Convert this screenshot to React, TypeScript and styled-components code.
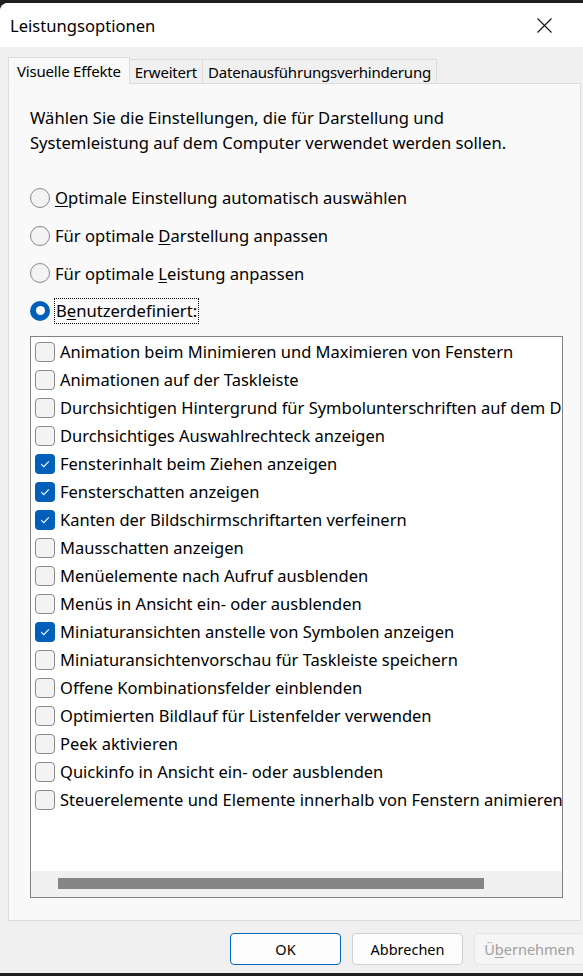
import React from 'react';
import styled, { createGlobalStyle } from 'styled-components';

const GlobalStyle = createGlobalStyle`
  *, *::before, *::after {
    box-sizing: border-box;
  }
  html, body {
    margin: 0;
    padding: 0;
    background: #1f1f1f;
  }
  body {
    font-family: 'Noto Sans', 'Open Sans', sans-serif;
    color: #000;
  }
`;

const Window = styled.div`
  width: 583px;
  height: 970px;
  margin-top: 3px;
  background: #f0f0f0;
  border-top-left-radius: 8px;
  overflow: hidden;
  display: flex;
  flex-direction: column;
`;

const TitleBar = styled.div`
  height: 44px;
  flex-shrink: 0;
  background: #fff;
  display: flex;
  align-items: center;
  justify-content: space-between;
  padding: 0 31px 0 10px;
  font-size: 16.6px;
`;

const Body = styled.div`
  flex: 1;
  display: flex;
  flex-direction: column;
  padding: 10px 2px 0 8px;
`;

const Tabs = styled.div`
  display: flex;
  align-items: flex-end;
  height: 26px;
  flex-shrink: 0;
  position: relative;
  z-index: 1;
`;

const Tab = styled.div<{ $active?: boolean }>`
  height: ${(p) => (p.$active ? '27px' : '25px')};
  padding: 0 ${(p) => (p.$active ? '8px' : '5px')};
  display: flex;
  align-items: center;
  font-size: 15px;
  letter-spacing: -0.2px;
  background: ${(p) => (p.$active ? '#f9f9f9' : '#f0f0f0')};
  border: 1px solid #dcdcdc;
  border-bottom: ${(p) => (p.$active ? '1px solid #f9f9f9' : '1px solid #dcdcdc')};
  margin-left: ${(p) => (p.$active ? '0' : '-1px')};
  margin-bottom: -1px;
`;

const Panel = styled.div`
  height: 838px;
  flex-shrink: 0;
  background: #f9f9f9;
  border: 1px solid #dcdcdc;
  padding: 21px 17px 0 21px;
  display: flex;
  flex-direction: column;
`;

const Description = styled.p`
  margin: 0 0 24px;
  font-size: 16.6px;
  line-height: 25px;
`;

const RadioGroup = styled.div`
  display: flex;
  flex-direction: column;
  margin-bottom: 6px;
`;

const RadioRow = styled.label`
  display: flex;
  align-items: center;
  height: 37.7px;
  font-size: 16.6px;
`;

const RadioCircle = styled.span<{ $checked?: boolean }>`
  width: 20px;
  height: 20px;
  border-radius: 50%;
  margin-right: 5px;
  flex-shrink: 0;
  display: flex;
  align-items: center;
  justify-content: center;
  border: ${(p) => (p.$checked ? 'none' : '1px solid #8a8a8a')};
  background: ${(p) => (p.$checked ? '#005fb8' : '#f3f3f3')};
  &::after {
    content: '';
    display: ${(p) => (p.$checked ? 'block' : 'none')};
    width: 9px;
    height: 9px;
    border-radius: 50%;
    background: #fff;
  }
`;

const FocusLabel = styled.span`
  outline: 1px dotted #000;
  padding: 0 1px;
  line-height: 24px;
`;

const Key = styled.span`
  text-decoration: underline;
  text-underline-offset: 2px;
`;

const ListBox = styled.div`
  height: 562px;
  flex-shrink: 0;
  background: #fff;
  border: 1px solid #828282;
  display: flex;
  flex-direction: column;
  overflow: hidden;
`;

const Items = styled.div`
  flex: 1;
  padding-top: 1px;
  overflow: hidden;
`;

const Item = styled.div`
  display: flex;
  align-items: center;
  height: 28px;
  padding-left: 4px;
  white-space: nowrap;
  font-size: 16.5px;
`;

const Box = styled.span<{ $checked?: boolean }>`
  width: 20px;
  height: 20px;
  border-radius: 4px;
  margin-right: 5px;
  flex-shrink: 0;
  display: flex;
  align-items: center;
  justify-content: center;
  border: ${(p) => (p.$checked ? 'none' : '1px solid #8a8a8a')};
  background: ${(p) => (p.$checked ? '#005fb8' : '#f3f3f3')};
`;

const HScroll = styled.div`
  height: 26px;
  flex-shrink: 0;
  background: #f0f0f0;
  display: flex;
  align-items: center;
  padding-left: 27px;
`;

const Thumb = styled.div`
  width: 426px;
  height: 11px;
  background: #858585;
`;

const Footer = styled.div`
  display: flex;
  justify-content: flex-end;
  gap: 11px;
  padding-top: 12px;
  margin-right: -4px;
`;

const Button = styled.button<{ $primary?: boolean }>`
  width: 111px;
  height: 32px;
  font-family: inherit;
  font-size: 14.5px;
  border-radius: 4px;
  background: #fdfdfd;
  color: ${(p) => (p.disabled ? '#a0a0a0' : '#000')};
  border: 1px solid ${(p) => (p.$primary ? '#0067c0' : p.disabled ? '#e5e5e5' : '#d0d0d0')};
  padding: 0;
  &:disabled {
    background: #f5f5f5;
  }
`;

const Check = () => (
  <svg width="12" height="12" viewBox="0 0 12 12">
    <path d="M2.2 6.2 L4.8 8.7 L9.8 3.4" fill="none" stroke="#fff" strokeWidth="1.1" />
  </svg>
);

const Close = () => (
  <svg width="15" height="15" viewBox="0 0 15 15">
    <path d="M0.5 0.5 L14.5 14.5 M14.5 0.5 L0.5 14.5" stroke="#1a1a1a" strokeWidth="1.2" />
  </svg>
);

const items: [string, boolean][] = [
  ['Animation beim Minimieren und Maximieren von Fenstern', false],
  ['Animationen auf der Taskleiste', false],
  ['Durchsichtigen Hintergrund für Symbolunterschriften auf dem Desktop', false],
  ['Durchsichtiges Auswahlrechteck anzeigen', false],
  ['Fensterinhalt beim Ziehen anzeigen', true],
  ['Fensterschatten anzeigen', true],
  ['Kanten der Bildschirmschriftarten verfeinern', true],
  ['Mausschatten anzeigen', false],
  ['Menüelemente nach Aufruf ausblenden', false],
  ['Menüs in Ansicht ein- oder ausblenden', false],
  ['Miniaturansichten anstelle von Symbolen anzeigen', true],
  ['Miniaturansichtenvorschau für Taskleiste speichern', false],
  ['Offene Kombinationsfelder einblenden', false],
  ['Optimierten Bildlauf für Listenfelder verwenden', false],
  ['Peek aktivieren', false],
  ['Quickinfo in Ansicht ein- oder ausblenden', false],
  ['Steuerelemente und Elemente innerhalb von Fenstern animieren', false],
];

function App() {
  return (
    <>
      <GlobalStyle />
      <Window>
        <TitleBar>
          <span>Leistungsoptionen</span>
          <Close />
        </TitleBar>
        <Body>
          <Tabs>
            <Tab $active>Visuelle Effekte</Tab>
            <Tab>Erweitert</Tab>
            <Tab>Datenausführungsverhinderung</Tab>
          </Tabs>
          <Panel>
            <Description>
              Wählen Sie die Einstellungen, die für Darstellung und
              <br />
              Systemleistung auf dem Computer verwendet werden sollen.
            </Description>
            <RadioGroup>
              <RadioRow>
                <RadioCircle />
                <span>
                  <Key>O</Key>ptimale Einstellung automatisch auswählen
                </span>
              </RadioRow>
              <RadioRow>
                <RadioCircle />
                <span>
                  Für optimale <Key>D</Key>arstellung anpassen
                </span>
              </RadioRow>
              <RadioRow>
                <RadioCircle />
                <span>
                  Für optimale <Key>L</Key>eistung anpassen
                </span>
              </RadioRow>
              <RadioRow>
                <RadioCircle $checked />
                <FocusLabel>
                  B<Key>e</Key>nutzerdefiniert:
                </FocusLabel>
              </RadioRow>
            </RadioGroup>
            <ListBox>
              <Items>
                {items.map(([text, checked]) => (
                  <Item key={text}>
                    <Box $checked={checked}>{checked && <Check />}</Box>
                    {text}
                  </Item>
                ))}
              </Items>
              <HScroll>
                <Thumb />
              </HScroll>
            </ListBox>
          </Panel>
          <Footer>
            <Button $primary>OK</Button>
            <Button>Abbrechen</Button>
            <Button disabled>
              Ü<Key>b</Key>ernehmen
            </Button>
          </Footer>
        </Body>
      </Window>
    </>
  );
}

export default App;
